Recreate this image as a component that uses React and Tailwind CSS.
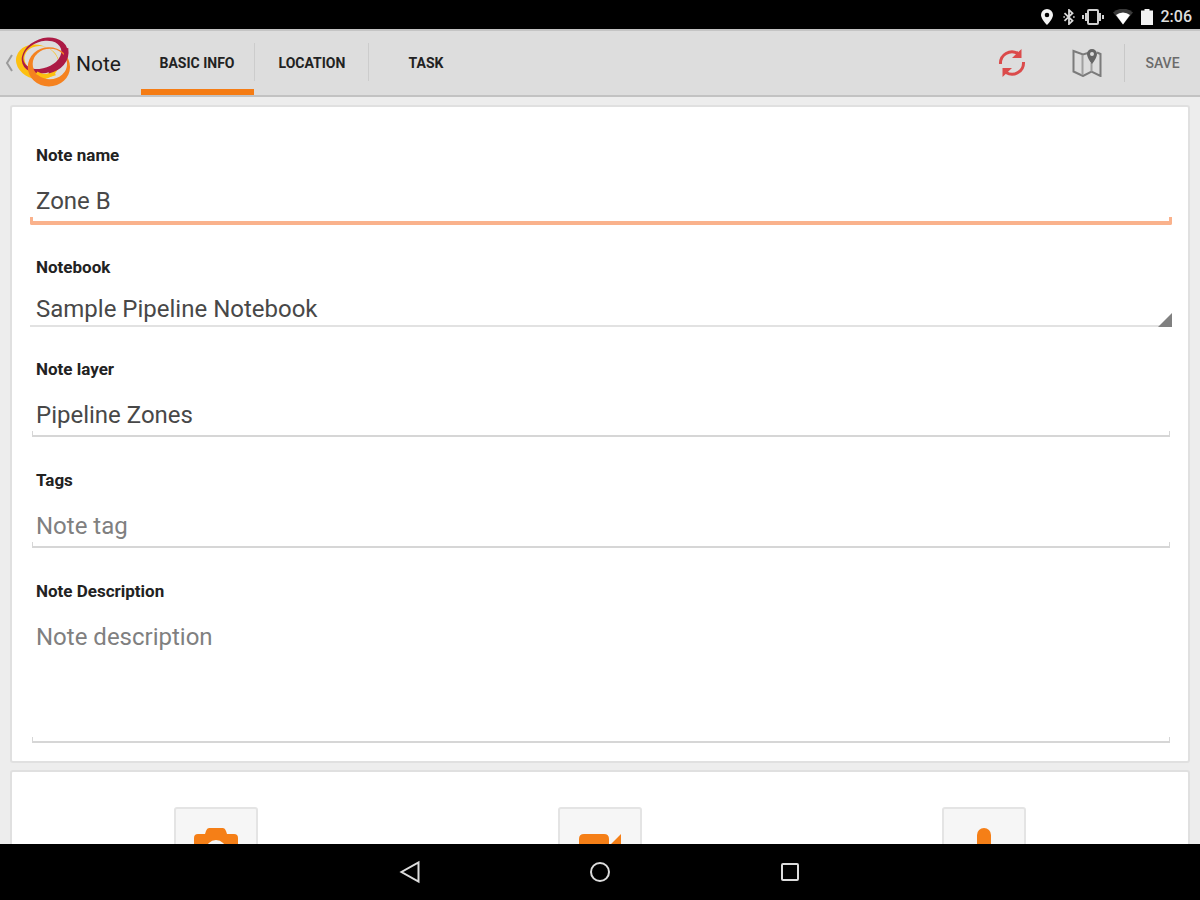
import React from 'react';

const tabs = ['BASIC INFO', 'LOCATION', 'TASK'];

const StatusBar = () => (
  <div className="flex h-[29px] shrink-0 items-center justify-end bg-black pr-2 pt-1 text-white">
    <svg className="mr-2 h-4 w-3" viewBox="0 0 12 16" fill="#f2f2f2">
      <path fillRule="evenodd" d="M6 0a6 6 0 0 0-6 6c0 4 6 10 6 10s6-6 6-10a6 6 0 0 0-6-6Zm0 3.700a2.300 2.300 0 1 1 0 4.600 2.300 2.300 0 0 1 0-4.600Z" />
    </svg>
    <svg className="mr-1 h-4 w-4" viewBox="0 0 16 16" fill="none" stroke="#d8d8d8" strokeWidth="1.800">
      <path d="M3.500 4.200 11.500 11.800 8 15V1l3.500 3.200-8 7.600" />
      <path d="M2.500 8h1.200M12.300 8h1.200" />
    </svg>
    <svg className="mr-2 h-4 w-6" viewBox="0 0 24 16" fill="none" stroke="#d0d0d0">
      <rect x="7" y="1" width="10" height="14" rx="1" strokeWidth="2" />
      <path d="M5 4v8M19 4v8" strokeWidth="2" />
      <path d="M2 6v4M22 6v4" strokeWidth="2" />
    </svg>
    <svg className="mr-2 h-4 w-5" viewBox="0 0 20 16">
      <path d="M0 3.500a15 15 0 0 1 20 0L10 15.500Z" fill="#3a3a3a" />
      <path d="M3 6a11 11 0 0 1 14 0l-7 9.500Z" fill="#ffffff" />
    </svg>
    <svg className="mr-2 h-4 w-3" viewBox="0 0 12 16" fill="#f2f2f2">
      <path d="M3.500 0h5v1.500H12V16H0V1.500h3.500Z" />
    </svg>
    <span className="text-[16px] leading-5 font-medium text-[#dedede]">2:06</span>
  </div>
);

// Three crescent rings, each an outer ellipse with an offset hole
const Logo = () => (
  <svg className="h-[52px] w-[56px]" viewBox="0 0 57 52" fillRule="evenodd">
    <g transform="rotate(15 23 24)" fill="#fdc010">
      <path d="M1 25a22 17.500 0 1 0 44 0a22 17.500 0 1 0-44 0ZM9 22a17.500 14 0 1 0 35 0a17.500 14 0 1 0-35 0Z" />
    </g>
    <g transform="rotate(-20 30 18)" fill="#ac1a45">
      <path d="M6 18.500a24 17.500 0 1 0 48 0a24 17.500 0 1 0-48 0ZM8 17a20 13.500 0 1 0 40 0a20 13.500 0 1 0-40 0Z" />
    </g>
    <path fill="#f58220" d="M13 30a21.500 20 0 1 0 43 0a21.500 20 0 1 0-43 0ZM18 27a17.500 15.500 0 1 0 35 0a17.500 15.500 0 1 0-35 0Z" />
    <path d="M34 34.500C45 32 54 24 52 11" fill="none" stroke="#ac1a45" strokeWidth="4.500" />
    <path d="M22 36q8 5 19 1" fill="none" stroke="#fdc010" strokeWidth="3" />
  </svg>
);

const SyncIcon = () => (
  <svg className="h-7 w-7" viewBox="0 0 28 28" fill="none" stroke="#db4b4b" strokeWidth="3">
    <path d="M2.500 15A11.500 11.500 0 0 1 20 4.500" />
    <path d="M25.500 13A11.500 11.500 0 0 1 8 23.500" />
    <path d="M23.500 0v9H14Z" fill="#db4b4b" stroke="none" />
    <path d="M4.500 28v-9H14Z" fill="#db4b4b" stroke="none" />
  </svg>
);

const MapIcon = () => (
  <svg className="h-7 w-[30px]" viewBox="0 0 30 28" fill="none" stroke="#7b7b7b" strokeWidth="2">
    <path d="M16 4 11 5.500 1.500 2V22.500L11 27l8.500-4.500L28.500 27V5L25 3.500" />
    <path d="M10.500 6v20M19.500 14v8.500" strokeWidth="2" stroke="#a0a0a0" />
    <path fillRule="evenodd" d="M20 0a5 5 0 0 0-5 5c0 4 5 10 5 10s5-6 5-10a5 5 0 0 0-5-5Zm0 3a2 2 0 1 1 0 4 2 2 0 0 1 0-4Z" fill="#666666" stroke="none" />
  </svg>
);

const Header = () => (
  <header className="flex h-[68px] shrink-0 items-stretch border-t-2 border-b-2 border-t-[#c4c4c4] border-b-[#c2c2c2] bg-[#dddddd]">
    <button className="flex w-[141px] items-center pl-[5px]" aria-label="Back to notes">
      <svg className="mr-[2px] h-[18px] w-2" viewBox="0 0 8 18" fill="none" stroke="#9a9a9a" strokeWidth="2">
        <path d="M7 1 2 9l5 8" />
      </svg>
      <Logo />
      <span className="ml-[5px] pt-[2px] text-[21px] leading-7 text-[#1c1c1c]">Note</span>
    </button>
    <nav className="flex">
      {tabs.map((tab, i) => (
        <button
          key={tab}
          className={`relative w-[114px] text-[14px] font-bold text-[#222222] ${i === 0 ? 'pr-[2px]' : ''}`}
        >
          {tab}
          {i === 0 && <span className="absolute bottom-0 left-0 h-[6px] w-[113px] bg-[#f57c14]" />}
          {i < tabs.length - 1 && <span className="absolute top-3 right-0 h-[38px] w-px bg-[#cccccc]" />}
        </button>
      ))}
    </nav>
    <div className="ml-auto flex items-center">
      <button className="mr-[46px]" aria-label="Sync"><SyncIcon /></button>
      <button className="mr-[22px]" aria-label="Map"><MapIcon /></button>
      <button className="h-[38px] w-[76px] border-l border-[#c8c8c8] text-[14px] font-medium text-[#6b6b6b]">SAVE</button>
    </div>
  </header>
);

// Holo style underline with a small tick at each end
const Underline = ({ active }) => (
  <div
    className={
      active
        ? 'h-2 rounded-b-[2px] border-x-[3px] border-b-4 border-[#fab28c]'
        : 'mx-[2px] h-[6px] border-x border-b-2 border-[#d6d6d6]'
    }
  />
);

const Label = ({ htmlFor, children }) => (
  <label htmlFor={htmlFor} className="block pl-[6px] text-[17px] leading-6 font-bold text-[#222222]">
    {children}
  </label>
);

const Field = ({ id, label, active, children }) => (
  <div className={active ? 'mb-[30px]' : 'mb-[31px]'}>
    <Label htmlFor={id}>{label}</Label>
    <div className="mt-[18px]">{children}</div>
    <Underline active={active} />
  </div>
);

const inputClass =
  'block h-8 w-full bg-transparent px-[6px] text-[24px] leading-8 text-[#484848] placeholder:text-[#808080] outline-none';

const MediaButton = ({ label, children }) => (
  <div className="flex justify-center">
    <button aria-label={label} className="flex h-[84px] w-[84px] items-center justify-center rounded-[3px] border-2 border-[#e4e4e4] bg-[#f6f6f6]">
      {children}
    </button>
  </div>
);

export default function App() {
  return (
    <div className="flex h-screen flex-col overflow-hidden bg-[#ededed] font-['Roboto',sans-serif]">
      <StatusBar />
      <Header />
      <main className="min-h-0 flex-1 overflow-hidden px-[10px] pt-2">
        <form className="rounded-[3px] border-2 border-[#e0e0e0] bg-white pt-9 pr-4 pb-[18px] pl-[18px]" onSubmit={(e) => e.preventDefault()}>
          <Field id="name" label="Note name" active>
            <input id="name" type="text" defaultValue="Zone B" className={inputClass} />
          </Field>
          <div className="mb-[30px]">
            <Label htmlFor="notebook">Notebook</Label>
            <div className="relative mt-[14px] border-b-2 border-[#e2e2e2]">
              <select id="notebook" className={`${inputClass} appearance-none`}>
                <option>Sample Pipeline Notebook</option>
              </select>
              <svg className="pointer-events-none absolute right-0 -bottom-[2px] h-[14px] w-[14px]" viewBox="0 0 14 14" fill="#808080">
                <path d="M14 0v14H0Z" />
              </svg>
            </div>
          </div>
          <Field id="layer" label="Note layer">
            <input id="layer" type="text" defaultValue="Pipeline Zones" className={inputClass} />
          </Field>
          <Field id="tags" label="Tags">
            <input id="tags" type="text" placeholder="Note tag" className={inputClass} />
          </Field>
          <div>
            <Label htmlFor="description">Note Description</Label>
            <textarea
              id="description"
              placeholder="Note description"
              className="mt-[18px] block h-[116px] w-full resize-none bg-transparent px-[6px] text-[24px] leading-8 text-[#484848] outline-none placeholder:text-[#808080]"
            />
            <Underline />
          </div>
        </form>

        <section className="mt-[7px] grid grid-cols-3 rounded-[3px] border-2 border-[#e0e0e0] bg-white px-3 pt-[35px] pb-9">
          <MediaButton label="Take photo">
            <svg className="h-[44px] w-[44px]" viewBox="0 0 44 44">
              <path fillRule="evenodd" fill="#f57f17" d="M15 1h14q2 0 3 3l1 3h7q4 0 4 4v24q0 4-4 4H4q-4 0-4-4V11q0-4 4-4h7l1-3q1-3 3-3Zm7 12a10 10 0 1 0 0 20 10 10 0 0 0 0-20Z" />
              <circle cx="22" cy="23" r="6" fill="#f57f17" />
            </svg>
          </MediaButton>
          <MediaButton label="Record video">
            <svg className="h-[44px] w-[42px]" viewBox="0 0 42 44" fill="#f57f17">
              <path d="M5 7h20q5 0 5 5v20q0 5-5 5H5q-5 0-5-5V12q0-5 5-5ZM32 17 42 7v30L32 27Z" />
            </svg>
          </MediaButton>
          <MediaButton label="Record audio">
            <svg className="h-[44px] w-[32px]" viewBox="0 0 32 44" fill="none" stroke="#f57f17" strokeWidth="3">
              <rect x="9" y="1" width="14" height="26" rx="7" fill="#f57f17" stroke="none" />
              <path d="M3 20a13 13 0 0 0 26 0M16 33v9M8 42h16" />
            </svg>
          </MediaButton>
        </section>
      </main>

      <nav className="flex h-14 shrink-0 items-center justify-center bg-black">
        <button className="flex w-[190px] justify-center" aria-label="Back">
          <svg className="h-6 w-6" viewBox="0 0 24 24" fill="none" stroke="#dcdcdc" strokeWidth="2">
            <path d="M20.500 2.500v19L3.500 12Z" />
          </svg>
        </button>
        <button className="flex w-[190px] justify-center" aria-label="Home">
          <svg className="h-6 w-6" viewBox="0 0 24 24" fill="none" stroke="#dcdcdc" strokeWidth="2">
            <circle cx="12" cy="12" r="9" />
          </svg>
        </button>
        <button className="flex w-[190px] justify-center" aria-label="Recent apps">
          <svg className="h-6 w-6" viewBox="0 0 24 24" fill="none" stroke="#dcdcdc" strokeWidth="2">
            <rect x="4" y="4" width="16" height="16" rx="1" />
          </svg>
        </button>
      </nav>
    </div>
  );
}
